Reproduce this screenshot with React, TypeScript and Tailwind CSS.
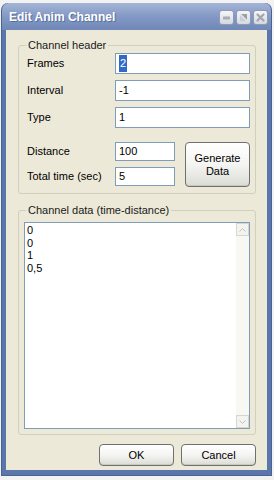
import React from "react";

const font = { fontFamily: '"Liberation Sans", Arial, sans-serif' };

function TitleButton({ kind }: { kind: "min" | "max" | "close" }) {
  return (
    <div className="flex h-[15px] w-[15px] items-center justify-center rounded-[3px] border border-[#8e9bb6] bg-gradient-to-b from-[#f6f6f8] to-[#d6d8de]">
      <svg width="11" height="11" viewBox="0 0 11 11">
        {kind === "min" ? <rect x="2" y="4.5" width="7" height="3" rx="0.5" fill="#a8acb5" /> : null}
        {kind === "max" ? (
          <g>
            <path d="M2 2 L9 2 L9 9 Z" fill="#9aa0aa" />
            <path d="M2 2 L9 9" stroke="#e9eaee" strokeWidth="1.6" />
            <path d="M2 9 L2 3 L8 9 Z" fill="#c9ccd3" />
          </g>
        ) : null}
        {kind === "close" ? (
          <path d="M2.5 2.5 L8.5 8.5 M8.5 2.5 L2.5 8.5" stroke="#a0a5ae" strokeWidth="2.2" strokeLinecap="round" />
        ) : null}
      </svg>
    </div>
  );
}

function Field({ label, value, selected }: { label: string; value: string; selected?: boolean }) {
  return (
    <div className="flex h-[21px] items-center">
      <span className="w-[96px] pl-[8px] text-[11px] text-black">{label}</span>
      <div className="flex h-[21px] w-[135px] items-center border border-[#7f9db9] bg-white pl-[3px] text-[11px] text-black">
        {selected ? <span className="bg-[#316ac5] px-[1px] text-white">{value}</span> : value}
      </div>
    </div>
  );
}

function SmallField({ label, value }: { label: string; value: string }) {
  return (
    <div className="flex h-[19px] items-center">
      <span className="w-[96px] pl-[8px] text-[11px] text-black">{label}</span>
      <div className="flex h-[19px] w-[60px] items-center border border-[#7f9db9] bg-white pl-[3px] text-[11px] text-black">
        {value}
      </div>
    </div>
  );
}

function XpButton({ children, className }: { children: React.ReactNode; className: string }) {
  return (
    <div
      className={`flex items-center justify-center rounded-[4px] border border-[#707070] bg-gradient-to-b from-[#ffffff] via-[#f4f4f2] to-[#dcdcd6] text-center text-[11px] leading-[13px] text-black shadow-[inset_0_-1px_0_#c8c8c0] ${className}`}
    >
      {children}
    </div>
  );
}

function Group({ label, className, children }: { label: string; className: string; children: React.ReactNode }) {
  return (
    <div className={`relative rounded-[3px] border border-[#d0d0bf] ${className}`}>
      <span className="absolute left-[7px] top-[-8px] bg-[#ece9d8] px-[2px] text-[11px] leading-[14px] text-[#1a1a1a]">
        {label}
      </span>
      {children}
    </div>
  );
}

export default function App() {
  return (
    <div className="h-[480px] w-[274px] bg-[#f2f2f2] pt-[3px] pl-[1px]" style={font}>
      <div className="flex h-[473px] w-[271px] flex-col rounded-t-[7px] border-x border-b border-[#4a6396] bg-[#5a76ab]">
        <div className="flex h-[27px] items-center justify-between rounded-t-[7px] bg-gradient-to-b from-[#a4b5d6] via-[#8398c4] to-[#7088b8] pl-[7px] pr-[3px]">
          <span className="text-[12px] font-bold text-white [text-shadow:1px_1px_0_#5a6f98]">Edit Anim Channel</span>
          <div className="flex gap-[2px] pt-[1px]">
            <TitleButton kind="min" />
            <TitleButton kind="max" />
            <TitleButton kind="close" />
          </div>
        </div>
        <div className="mx-[4px] flex h-[440px] flex-col bg-[#ece9d8] px-[12px] pt-[15px]">
          <Group label="Channel header" className="h-[149px] w-[238px] pt-[7px]">
            <div className="flex flex-col gap-[6px]">
              <Field label="Frames" value="2" selected />
              <Field label="Interval" value="-1" />
              <Field label="Type" value="1" />
            </div>
            <div className="mt-[14px] flex items-start">
              <div className="flex flex-col gap-[6px]">
                <SmallField label="Distance" value="100" />
                <SmallField label="Total time (sec)" value="5" />
              </div>
              <XpButton className="ml-[10px] h-[45px] w-[65px]">
                Generate
                <br />
                Data
              </XpButton>
            </div>
          </Group>
          <Group label="Channel data (time-distance)" className="mt-[16px] h-[225px] w-[238px] pt-[11px] pl-[5px]">
            <div className="flex h-[207px] w-[226px] border border-[#7f9db9] bg-white">
              <div className="flex-1 pl-[2px] pt-[1px] text-[11px] leading-[12.7px] text-black">
                <div>0</div>
                <div>0</div>
                <div>1</div>
                <div>0,5</div>
              </div>
              <div className="flex w-[13px] flex-col bg-[#f7f7f4]">
                <div className="flex h-[13px] items-center justify-center border border-[#d6d6d0] bg-[#f3f3ef]">
                  <svg width="7" height="4" viewBox="0 0 7 4">
                    <path d="M0.5 3.5 L3.5 0.5 L6.5 3.5" stroke="#c2c2ba" fill="none" />
                  </svg>
                </div>
                <div className="flex-1" />
                <div className="flex h-[13px] items-center justify-center border border-[#d6d6d0] bg-[#f3f3ef]">
                  <svg width="7" height="4" viewBox="0 0 7 4">
                    <path d="M0.5 0.5 L3.5 3.5 L6.5 0.5" stroke="#c2c2ba" fill="none" />
                  </svg>
                </div>
              </div>
            </div>
          </Group>
          <div className="mt-[9px] flex w-[238px] justify-end gap-[7px]">
            <XpButton className="h-[22px] w-[75px]">OK</XpButton>
            <XpButton className="h-[22px] w-[75px]">Cancel</XpButton>
          </div>
        </div>
      </div>
    </div>
  );
}
